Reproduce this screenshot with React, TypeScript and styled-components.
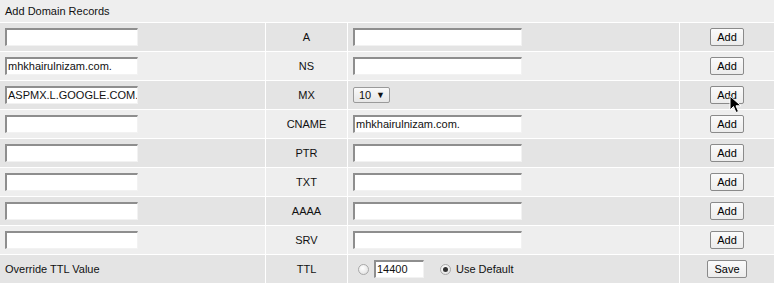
import React from 'react';
import styled, { createGlobalStyle } from 'styled-components';

const GlobalStyle = createGlobalStyle`
  html, body {
    margin: 0;
    padding: 0;
    background: #ffffff;
    font-family: "Liberation Sans", Arial, sans-serif;
    font-size: 11px;
    color: #111;
  }
`;

const Table = styled.div`
  position: relative;
  display: grid;
  grid-template-columns: 265px 81px 331px 1fr;
  grid-template-rows: 22px repeat(9, 28px);
  gap: 1px;
  background: #ffffff;
  width: 774px;
`;

const Header = styled.div`
  grid-column: 1 / -1;
  background: #eeeeee;
  display: flex;
  align-items: center;
  padding-left: 5px;
  font-size: 11px;
`;

const Cell = styled.div<{ $odd: boolean; $center?: boolean }>`
  background: ${({ $odd }) => ($odd ? '#e4e4e4' : '#eeeeee')};
  display: flex;
  align-items: center;
  justify-content: ${({ $center }) => ($center ? 'center' : 'flex-start')};
  padding: 0 5px;
`;

const TextInput = styled.div<{ $width: number }>`
  box-sizing: border-box;
  width: ${({ $width }) => $width}px;
  height: 18px;
  background: #ffffff;
  border-top: 2px solid #8e8e8e;
  border-left: 2px solid #8e8e8e;
  border-right: 1px solid #f2f2f2;
  border-bottom: 1px solid #f2f2f2;
  font-size: 11px;
  line-height: 15px;
  padding-left: 1px;
  white-space: nowrap;
  overflow: hidden;
`;

const Label = styled.span`
  font-size: 11px;
`;

const Button = styled.div<{ $width: number }>`
  box-sizing: border-box;
  width: ${({ $width }) => $width}px;
  height: 18px;
  border: 1px solid #8a8a8a;
  border-radius: 2px;
  background: linear-gradient(#fbfbfb, #ececec);
  display: flex;
  align-items: center;
  justify-content: center;
  font-size: 11px;
  color: #000;
`;

const FakeSelect = styled.div`
  box-sizing: border-box;
  width: 37px;
  height: 16px;
  padding: 0 4px 0 5px;
  border: 1px solid #9a9a9a;
  border-radius: 2px;
  background: linear-gradient(#fafafa, #e6e6e6);
  display: flex;
  align-items: center;
  justify-content: space-between;
  font-size: 11px;
`;

const Arrow = styled.span`
  font-size: 9px;
`;

const Radio = styled.span<{ $checked?: boolean }>`
  box-sizing: border-box;
  width: 11px;
  height: 11px;
  border-radius: 50%;
  border: 1px solid #a8a8a8;
  background: radial-gradient(circle at 40% 35%, #ffffff, #dcdcdc);
  display: inline-flex;
  align-items: center;
  justify-content: center;
  &::after {
    content: '';
    width: 5px;
    height: 5px;
    border-radius: 50%;
    background: ${({ $checked }) => ($checked ? '#333' : 'transparent')};
  }
`;

const TtlGroup = styled.div`
  display: flex;
  align-items: center;
  gap: 5px;
  padding-left: 5px;
`;

const Spacer = styled.span<{ $w: number }>`
  width: ${({ $w }) => $w}px;
`;

const Cursor = styled.svg`
  position: absolute;
  left: 729px;
  top: 95px;
`;

type Rec = { left: string; type: string; right?: string; select?: boolean };

const records: Rec[] = [
  { left: '', type: 'A', right: '' },
  { left: 'mhkhairulnizam.com.', type: 'NS', right: '' },
  { left: 'ASPMX.L.GOOGLE.COM.', type: 'MX', select: true },
  { left: '', type: 'CNAME', right: 'mhkhairulnizam.com.' },
  { left: '', type: 'PTR', right: '' },
  { left: '', type: 'TXT', right: '' },
  { left: '', type: 'AAAA', right: '' },
  { left: '', type: 'SRV', right: '' },
];

export default function App() {
  return (
    <>
      <GlobalStyle />
      <Table>
        <Header>Add Domain Records</Header>
        {records.map((r, i) => {
          const odd = i % 2 === 0;
          return (
            <React.Fragment key={r.type}>
              <Cell $odd={odd}>
                <TextInput $width={133}>{r.left}</TextInput>
              </Cell>
              <Cell $odd={odd} $center>
                <Label>{r.type}</Label>
              </Cell>
              <Cell $odd={odd}>
                {r.select ? (
                  <FakeSelect>
                    10 <Arrow>▼</Arrow>
                  </FakeSelect>
                ) : (
                  <TextInput $width={169}>{r.right}</TextInput>
                )}
              </Cell>
              <Cell $odd={odd} $center>
                <Button $width={34}>Add</Button>
              </Cell>
            </React.Fragment>
          );
        })}
        <Cell $odd>
          <Label>Override TTL Value</Label>
        </Cell>
        <Cell $odd $center>
          <Label>TTL</Label>
        </Cell>
        <Cell $odd>
          <TtlGroup>
            <Radio />
            <TextInput $width={50}>14400</TextInput>
            <Spacer $w={6} />
            <Radio $checked />
            <Label>Use Default</Label>
          </TtlGroup>
        </Cell>
        <Cell $odd $center>
          <Button $width={40}>Save</Button>
        </Cell>
        <Cursor width="14" height="20" viewBox="0 0 14 20">
          <path d="M1 1 L1 15 L4.5 11.5 L7 17.5 L9.5 16.5 L7 10.8 L12 10.8 Z" fill="#000" stroke="#fff" strokeWidth="1" />
        </Cursor>
      </Table>
    </>
  );
}
